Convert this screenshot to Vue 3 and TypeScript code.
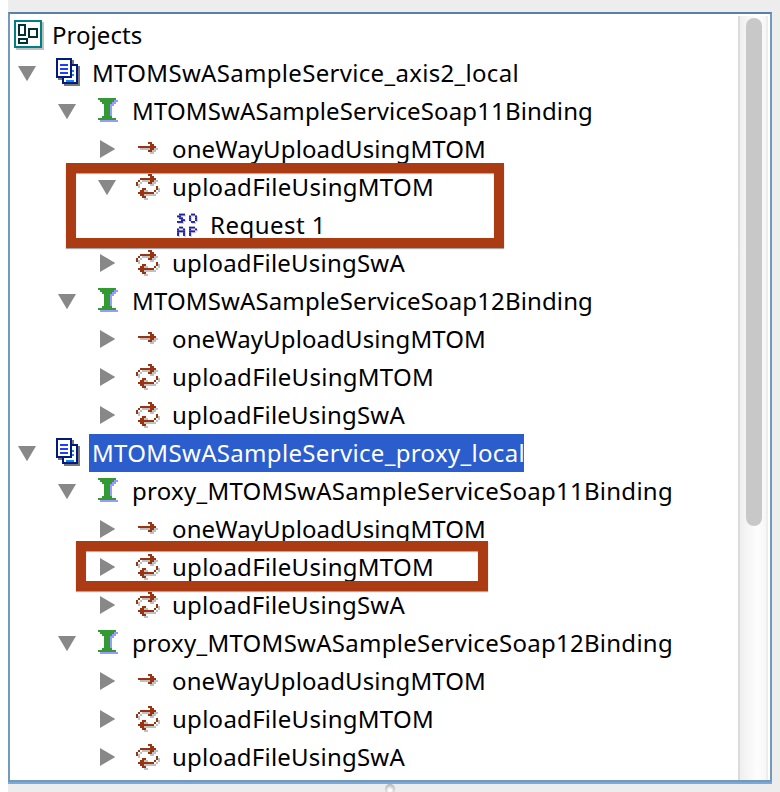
<script setup lang="ts">
import { nextTick, onMounted, ref } from 'vue'

type IconName = 'project' | 'interface' | 'oneway' | 'twoway' | 'soap'
interface TreeRow {
  label: string
  depth: number
  icon: IconName
  width: number
  toggle?: 'open' | 'closed'
  selected?: boolean
}
interface Pixel { x: number; y: number; w: number }

const operations = (expanded = false): TreeRow[] => [
  { label: 'oneWayUploadUsingMTOM', depth: 2, icon: 'oneway', width: 314, toggle: 'closed' },
  { label: 'uploadFileUsingMTOM', depth: 2, icon: 'twoway', width: 262, toggle: expanded ? 'open' : 'closed' },
  ...(expanded ? [{ label: 'Request 1', depth: 3, icon: 'soap' as IconName, width: 116 }] : []),
  { label: 'uploadFileUsingSwA', depth: 2, icon: 'twoway', width: 233, toggle: 'closed' },
]

const rows: TreeRow[] = [
  { label: 'MTOMSwASampleService_axis2_local', depth: 0, icon: 'project', width: 427, toggle: 'open' },
  { label: 'MTOMSwASampleServiceSoap11Binding', depth: 1, icon: 'interface', width: 461, toggle: 'open' },
  ...operations(true),
  { label: 'MTOMSwASampleServiceSoap12Binding', depth: 1, icon: 'interface', width: 461, toggle: 'open' },
  ...operations(),
  { label: 'MTOMSwASampleService_proxy_local', depth: 0, icon: 'project', width: 433, toggle: 'open', selected: true },
  { label: 'proxy_MTOMSwASampleServiceSoap11Binding', depth: 1, icon: 'interface', width: 541, toggle: 'open' },
  ...operations(),
  { label: 'proxy_MTOMSwASampleServiceSoap12Binding', depth: 1, icon: 'interface', width: 541, toggle: 'open' },
  ...operations(),
]

function pixels(map: string[]): Pixel[] {
  return map.flatMap((line, y) =>
    Array.from(line.matchAll(/#+/g), (m) => ({ x: m.index ?? 0, y, w: m[0].length })))
}

const arrow = pixels([
  '.....##...',
  '......##..',
  '#########.',
  '......##..',
  '.....##...',
])
const exchange = pixels([
  '......##...',
  '.......##..',
  '..########.',
  '.#.....##..',
  '#.....##...',
  '#..........',
  '..........#',
  '...##.....#',
  '..##.....#.',
  '.########..',
  '..##.......',
  '...##......',
])
const soap = pixels([
  '.###...##.',
  '##....#..#',
  '.##...#..#',
  '..##..#..#',
  '###....##.',
  '..........',
  '..........',
  '.##...###.',
  '#..#..#..#',
  '####..###.',
  '#..#..#...',
  '#..#..#...',
])

// Spreads each label's letters so that it fills its measured width.
const tree = ref<HTMLElement | null>(null)
const spacing = ref<number[]>(rows.map(() => 0))
onMounted(async () => {
  await nextTick()
  const spans = tree.value?.querySelectorAll<HTMLElement>('.label-text') ?? []
  spacing.value = Array.from(spans, (el, i) =>
    (rows[i].width - el.getBoundingClientRect().width) / rows[i].label.length)
})
</script>

<template>
  <div class="window">
    <div class="panel">
      <div ref="tree" class="tree">
        <div class="row root">
          <svg class="root-icon" width="30" height="30" viewBox="0 0 30 30" shape-rendering="crispEdges">
            <path fill="#c0c0c0" d="M2 2h28v28H2z" />
            <path fill="#fff" stroke="#008080" stroke-width="2" d="M1 1h26v26H1z" />
            <path fill="none" stroke="#003333" stroke-width="2" d="M5 5h6v10H5zM15 9h8v8h-8zM5 19h8v4H5z" />
          </svg>
          <span class="root-text">Projects</span>
        </div>
        <div v-for="(row, i) in rows" :key="i" class="row" :class="'depth-' + row.depth">
          <span class="toggle">
            <svg v-if="row.toggle" width="18" height="18" viewBox="0 0 18 18">
              <path v-if="row.toggle === 'open'" fill="#888" d="M0 2h18L9 17.3z" />
              <path v-else fill="#888" d="M2 0v18l15.3-9z" />
            </svg>
          </span>
          <span class="icon">
            <svg v-if="row.icon === 'project'" width="24" height="38" viewBox="0 0 24 38" shape-rendering="crispEdges">
              <path fill="#777" d="M2 6h16v20H2zM8 12h16v20H8z" />
              <path fill="#fff" stroke="#001a80" stroke-width="2" d="M7 11h14v18H7z" />
              <path fill="#0a8cff" d="M16 16h2v2h-2zM16 20h2v2h-2zM10 26h8v2h-8z" />
              <path fill="#fff" stroke="#001a80" stroke-width="2" d="M1 5h14v18H1z" />
              <path fill="#1f3fff" d="M4 10h8v2H4zM4 14h8v2H4zM4 18h8v2H4z" />
            </svg>
            <svg v-else-if="row.icon === 'interface'" width="24" height="38" viewBox="0 0 24 38" shape-rendering="crispEdges">
              <path fill="#9999ff" d="M18 8h4v2h-2v2h-2v2h-2v10h-2V12h2v-2h2zM4 28h18v2H4z" />
              <path fill="#339933" d="M2 6h18v2h-2v2h-2v2h-2v12h2v2h4v2H2v-2h4v-2h2V12H6v-2H4V8H2z" />
            </svg>
            <svg v-else-if="row.icon === 'oneway'" width="24" height="38" viewBox="0 0 12 19" shape-rendering="crispEdges">
              <g transform="translate(2 7)" fill="#c0c0c0">
                <rect v-for="(p, n) in arrow" :key="n" :x="p.x" :y="p.y" :width="p.w" height="1" />
              </g>
              <g transform="translate(1 6)" fill="#993311">
                <rect v-for="(p, n) in arrow" :key="n" :x="p.x" :y="p.y" :width="p.w" height="1" />
              </g>
            </svg>
            <svg v-else-if="row.icon === 'twoway'" width="24" height="38" viewBox="0 0 12 19" shape-rendering="crispEdges">
              <g transform="translate(1 4)" fill="#c0c0c0">
                <rect v-for="(p, n) in exchange" :key="n" :x="p.x" :y="p.y" :width="p.w" height="1" />
              </g>
              <g transform="translate(0 3)" fill="#993311">
                <rect v-for="(p, n) in exchange" :key="n" :x="p.x" :y="p.y" :width="p.w" height="1" />
              </g>
            </svg>
            <svg v-else class="soap" width="24" height="38" viewBox="0 0 12 19">
              <g transform="translate(1 4.3) scale(1 .93)" fill="#d0d0f0">
                <rect v-for="(p, n) in soap" :key="n" :x="p.x" :y="p.y" :width="p.w" height="1" />
              </g>
              <g transform="translate(.5 3.8) scale(1 .93)" fill="#22229a">
                <rect v-for="(p, n) in soap" :key="n" :x="p.x" :y="p.y" :width="p.w" height="1" />
              </g>
            </svg>
          </span>
          <span class="label" :class="{ selected: row.selected }">
            <span class="label-text" :style="{ letterSpacing: spacing[i] + 'px' }">{{ row.label }}</span>
          </span>
        </div>
      </div>
      <div class="scrollbar"><div class="thumb"></div></div>
      <div class="marker marker-first"></div>
      <div class="marker marker-second"></div>
    </div>
    <div class="divider"><span class="grip"></span></div>
  </div>
</template>

<style>
body { margin: 0; background: #fff; overflow: hidden; }
</style>

<style scoped>
.window {
  box-sizing: border-box;
  width: 772px;
  height: 792px;
  margin-left: 8px;
  padding: 12px 8px 0 0;
  background: #ededed;
  overflow: hidden;
  font-family: "Noto Sans", "Open Sans", sans-serif;
  font-size: 24px;
  line-height: 38px;
  color: #000;
}
.panel {
  position: relative;
  display: flex;
  box-sizing: border-box;
  height: 770px;
  border: 2px solid #7399bb;
  border-top-color: #5b80a8;
  background: #fff;
  box-shadow: 0 2px #7aaadc;
}
.tree { flex: 1; padding-top: 2px; min-width: 0; }
.row { display: flex; height: 38px; padding-left: 8px; white-space: pre; }
.root { padding-left: 4px; }
.root-icon { margin-top: 4px; }
.root-text { margin-left: 8px; letter-spacing: .05px; }
.depth-1 { padding-left: 48px; }
.depth-2 { padding-left: 88px; }
.depth-3 { padding-left: 128px; }
.toggle { width: 18px; height: 18px; margin-top: 10px; flex: none; }
.toggle svg, .icon svg, .root-icon { display: block; flex: none; }
.icon { width: 24px; height: 38px; margin-left: 20px; flex: none; }
.soap { filter: blur(.5px); }
.label { box-sizing: border-box; margin-left: 9px; padding-left: 3px; height: 38px; }
.depth-3 .label { margin-left: 7px; }
.selected { width: 435px; background: #2b5dcd; color: #fff; }
.scrollbar {
  box-sizing: border-box;
  width: 30px;
  margin: 2px 2px 0 0;
  padding: 2px 4px 0 6px;
  border-left: 2px solid #dcdcdc;
  border-right: 2px solid #ededed;
  background: linear-gradient(90deg, #efefef, #fdfdfd 65%, #f7f7f7);
}
.thumb { width: 16px; height: 508px; border-radius: 8px; background: #c8c8c8; }
.marker {
  position: absolute;
  box-sizing: border-box;
  border: 10px solid #aa3b13;
  box-shadow: 0 1px 1px rgba(0, 0, 0, .35), inset 0 1px 1px rgba(0, 0, 0, .35);
}
.marker-first { left: 56px; top: 149px; width: 438px; height: 85px; }
.marker-second { left: 66px; top: 527px; width: 412px; height: 50px; }
.divider { display: flex; justify-content: center; height: 10px; padding-top: 2px; }
.grip {
  width: 10px;
  height: 10px;
  flex: none;
  border-radius: 50%;
  position: relative;
  background: radial-gradient(circle at 50% 65%, #fff 15%, #ccc 55%, #999 100%);
}
</style>
